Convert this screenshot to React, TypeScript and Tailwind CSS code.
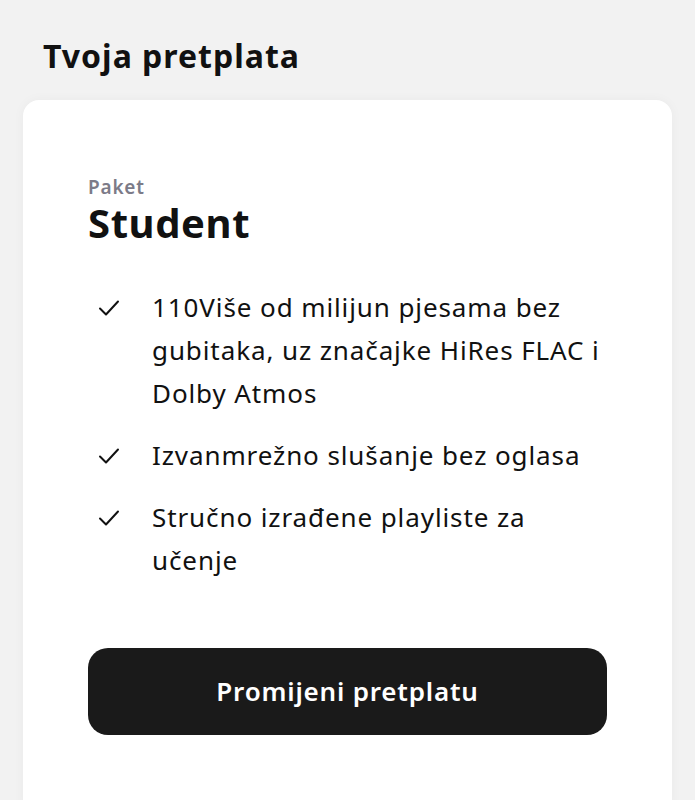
import { Fragment } from 'react';

const features = [
  '110Više od milijun pjesama bez gubitaka, uz značajke HiRes FLAC i Dolby Atmos',
  'Izvanmrežno slušanje bez oglasa',
  'Stručno izrađene playliste za učenje',
];

function Check() {
  return (
    <svg width="22" height="18" viewBox="0 0 22 18" fill="none" className="shrink-0">
      <path d="M2 9.5 L8 15.5 L20 2.5" stroke="#111" strokeWidth="2" strokeLinecap="round" strokeLinejoin="round" />
    </svg>
  );
}

export default function App() {
  return (
    <div className="min-h-screen bg-[#f2f2f2] font-['Noto_Sans',sans-serif] text-[#111]">
      <h1 className="px-[43px] pt-[36px] text-[32px] font-bold leading-[40px] tracking-[1px]">
        Tvoja pretplata
      </h1>

      {/* card */}
      <div className="mx-[23px] mt-[24px] min-h-[720px] rounded-[16px] bg-white px-[65px] pt-[76px] shadow-[0_0_12px_rgba(0,0,0,0.04)]">
        <p className="text-[19px] font-semibold leading-[22px] tracking-[0.8px] text-[#7c7b88]">Paket</p>
        <h2 className="mt-[4px] text-[40px] font-bold leading-[42px] tracking-[0.6px]">Student</h2>

        <ul className="mt-[42px] flex flex-col gap-[19px]">
          {features.map((f) => (
            <Fragment key={f}>
              <li className="flex items-start">
                <div className="flex h-[43px] w-[64px] shrink-0 items-center pl-[10px]">
                  <Check />
                </div>
                <span className="text-[26px] leading-[43px] tracking-[0.9px]">{f}</span>
              </li>
            </Fragment>
          ))}
        </ul>

        <button className="mt-[66px] flex h-[87px] w-full items-center justify-center rounded-[20px] bg-[#1a1a1a] text-[26px] font-semibold tracking-[0.8px] text-white">
          Promijeni pretplatu
        </button>
      </div>
    </div>
  );
}
